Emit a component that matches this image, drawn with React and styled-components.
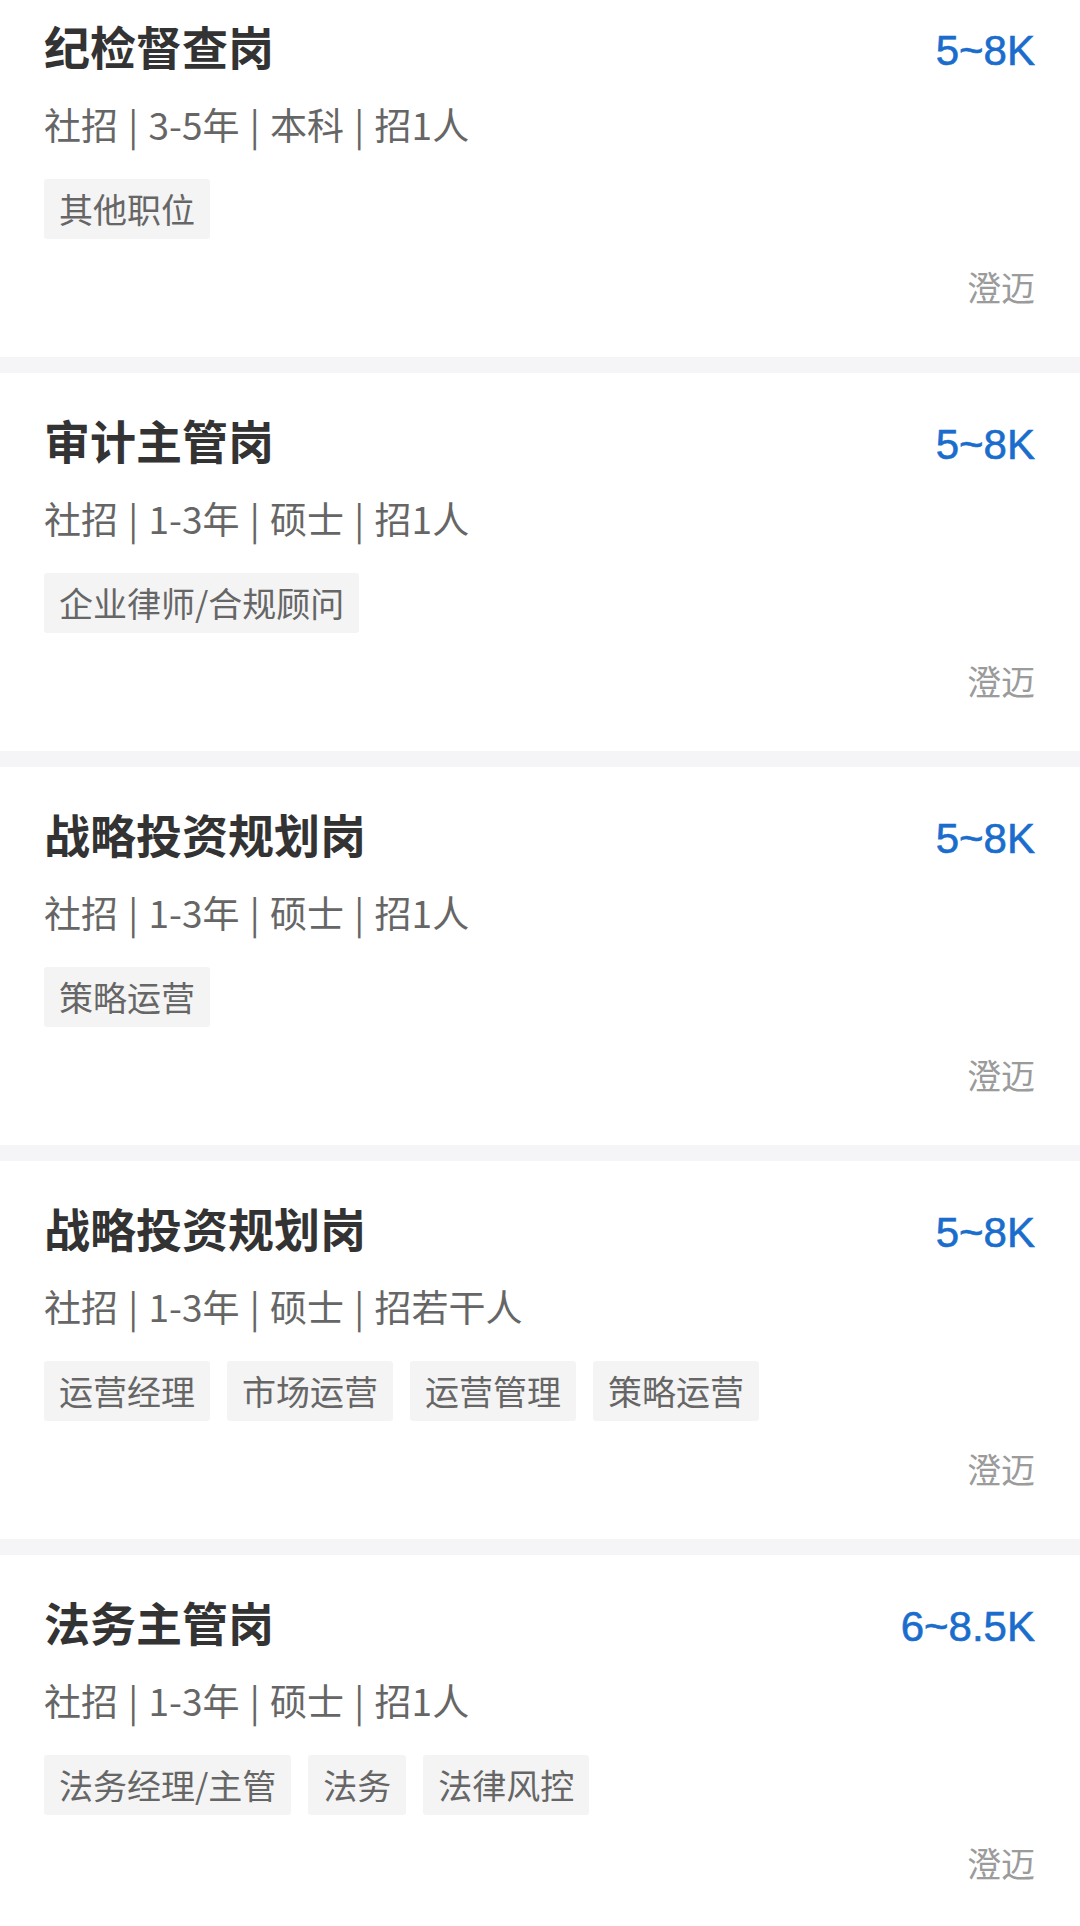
import React from "react";
import styled, { createGlobalStyle } from "styled-components";

const GlobalStyle = createGlobalStyle`
  html, body {
    margin: 0;
    padding: 0;
    background: #ffffff;
  }
  body {
    font-family: "Noto Sans CJK SC", "Noto Sans", sans-serif;
    overflow: hidden;
  }
`;

const Page = styled.div`
  width: 1080px;
  height: 1926px;
  overflow: hidden;
  background: #ffffff;
`;

const List = styled.div`
  display: flex;
  flex-direction: column;
  margin-top: -21px;
`;

const Card = styled.div`
  display: flex;
  flex-direction: column;
  padding: 36px 45px 50px 44px;
  background: #ffffff;
  border-bottom: 16px solid #f5f5f7;
`;

const Header = styled.div`
  display: flex;
  align-items: baseline;
  justify-content: space-between;
  height: 60px;
`;

const Title = styled.div`
  font-size: 46px;
  line-height: 60px;
  font-weight: 700;
  color: #333333;
`;

const Salary = styled.div`
  font-family: "Liberation Sans", Arial, sans-serif;
  font-size: 42px;
  line-height: 48px;
  color: #1a6dcc;
  -webkit-text-stroke: 0.6px #1a6dcc;
`;

const Meta = styled.div`
  margin-top: 24px;
  font-size: 37px;
  line-height: 50px;
  color: #666666;
  word-spacing: 2px;
`;

const Tags = styled.div`
  display: flex;
  gap: 17px;
  margin-top: 30px;
`;

const Tag = styled.span`
  display: inline-block;
  height: 60px;
  line-height: 60px;
  padding: 0 15px;
  font-size: 34px;
  color: #666666;
  background: #f4f4f4;
  border-radius: 3px;
`;

const Location = styled.div`
  margin-top: 28px;
  align-self: flex-end;
  font-size: 34px;
  line-height: 40px;
  color: #9b9b9b;
`;

const jobs = [
  { title: "纪检督查岗", salary: "5~8K", meta: "社招 | 3-5年 | 本科 | 招1人", tags: ["其他职位"] },
  { title: "审计主管岗", salary: "5~8K", meta: "社招 | 1-3年 | 硕士 | 招1人", tags: ["企业律师/合规顾问"] },
  { title: "战略投资规划岗", salary: "5~8K", meta: "社招 | 1-3年 | 硕士 | 招1人", tags: ["策略运营"] },
  { title: "战略投资规划岗", salary: "5~8K", meta: "社招 | 1-3年 | 硕士 | 招若干人", tags: ["运营经理", "市场运营", "运营管理", "策略运营"] },
  { title: "法务主管岗", salary: "6~8.5K", meta: "社招 | 1-3年 | 硕士 | 招1人", tags: ["法务经理/主管", "法务", "法律风控"] },
];

export default function App() {
  return (
    <Page>
      <GlobalStyle />
      <List>
        {jobs.map((job, i) => (
          <Card key={i}>
            <Header>
              <Title>{job.title}</Title>
              <Salary>{job.salary}</Salary>
            </Header>
            <Meta>{job.meta}</Meta>
            <Tags>
              {job.tags.map((t) => (
                <Tag key={t}>{t}</Tag>
              ))}
            </Tags>
            <Location>澄迈</Location>
          </Card>
        ))}
      </List>
    </Page>
  );
}
